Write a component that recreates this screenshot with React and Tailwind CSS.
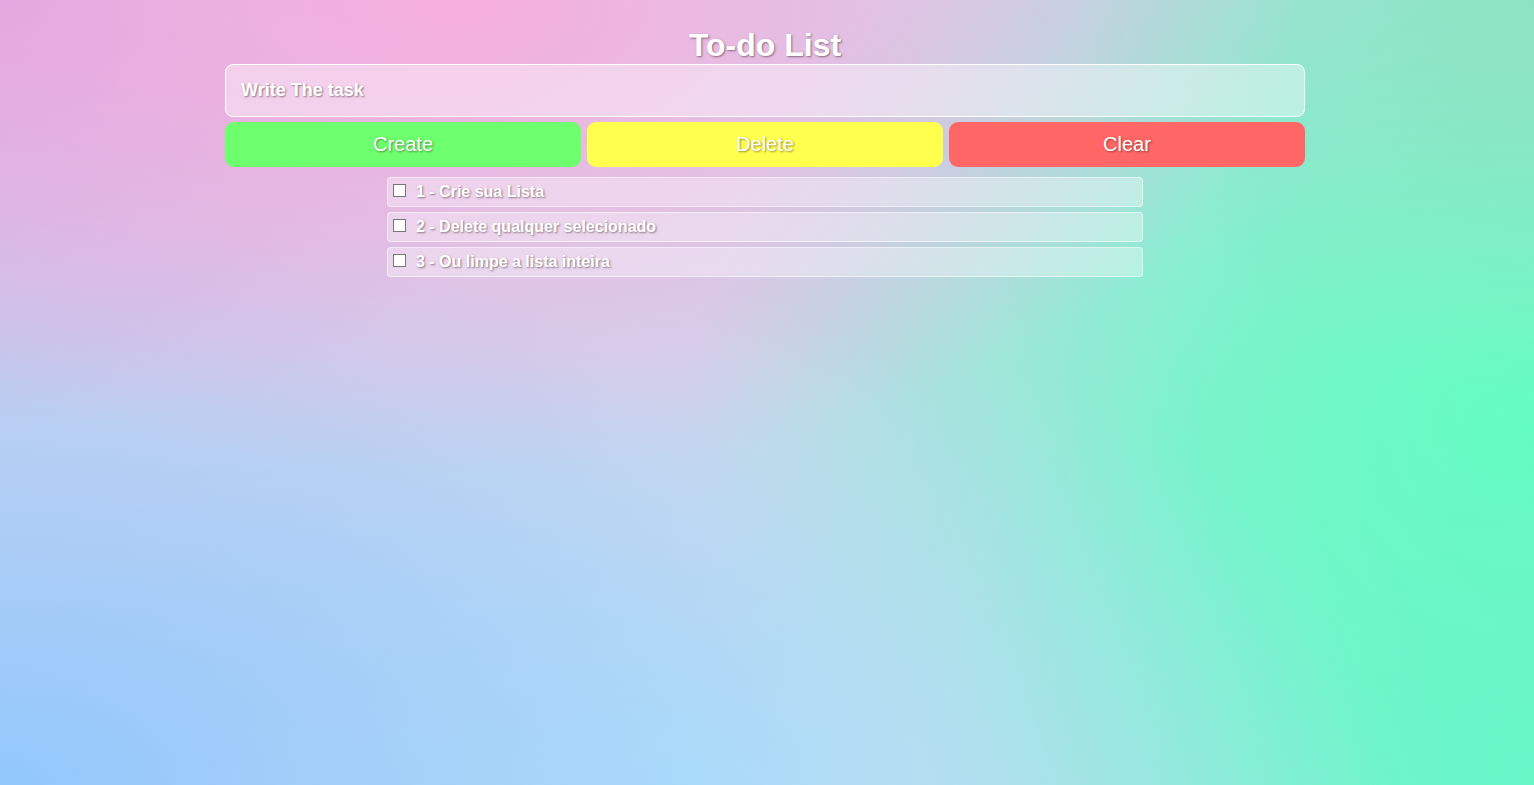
export default function App() {
  const items = ["1 - Crie sua Lista", "2 - Delete qualquer selecionado", "3 - Ou limpe a lista inteira"];
  const shadow = "[text-shadow:1px_1px_2px_rgba(60,40,40,0.55)]";
  return (
    <div className="min-h-[785px] w-full font-['Liberation_Sans',Arial,sans-serif] bg-[#cfd3eb] bg-[radial-gradient(ellipse_55%_60%_at_30%_0%,#f5aede_0%,rgba(245,174,222,0)_100%),radial-gradient(ellipse_40%_55%_at_0%_0%,#d8a2e0_0%,rgba(216,162,224,0)_100%),radial-gradient(ellipse_60%_75%_at_0%_100%,#92c8fd_0%,rgba(146,200,253,0)_100%),radial-gradient(ellipse_45%_60%_at_45%_100%,#b0e0f8_0%,rgba(176,224,248,0)_100%),radial-gradient(ellipse_30%_50%_at_100%_0%,#8ce3c2_0%,rgba(140,227,194,0)_100%),radial-gradient(ellipse_40%_70%_at_100%_100%,#66f7c7_0%,rgba(102,247,199,0)_100%),radial-gradient(ellipse_55%_90%_at_100%_55%,#62ffbf_0%,#7ef2cc_40%,rgba(126,242,204,0)_100%)]">
      <div className="w-[1080px] ml-[225px] pt-[27px] flex flex-col">
        <h1 className={`text-[32px] leading-[37px] font-bold text-white text-center ${shadow}`}>To-do List</h1>
        <input
          type="text"
          placeholder="Write The task"
          className={`h-[53px] w-full rounded-lg border border-white bg-white/40 px-[15px] text-[18px] font-bold text-white placeholder:text-white outline-none ${shadow}`}
        />
        <div className="mt-[5px] grid grid-cols-3 gap-[6px]">
          <button className={`h-[45px] pb-[1px] rounded-[9px] bg-[#6dff6d] text-[20px] text-white ${shadow}`}>Create</button>
          <button className={`h-[45px] pb-[1px] rounded-[9px] bg-[#ffff4d] text-[20px] text-white ${shadow}`}>Delete</button>
          <button className={`h-[45px] pb-[1px] rounded-[9px] bg-[#ff6666] text-[20px] text-white ${shadow}`}>Clear</button>
        </div>
        <ul className="mt-[10px] w-[756px] mx-auto flex flex-col gap-[5px]">
          {items.map((t) => (
            <li key={t} className="h-[30px] flex items-center rounded-[4px] border border-white/50 bg-white/35 pl-[5px]">
              <input type="checkbox" className="m-0 -mt-[3px] h-[13px] w-[13px] appearance-none rounded-none border border-[#767676] bg-white" />
              <span className={`ml-[10px] -mt-[1px] text-[16px] font-bold text-white ${shadow}`}>{t}</span>
            </li>
          ))}
        </ul>
      </div>
    </div>
  );
}
